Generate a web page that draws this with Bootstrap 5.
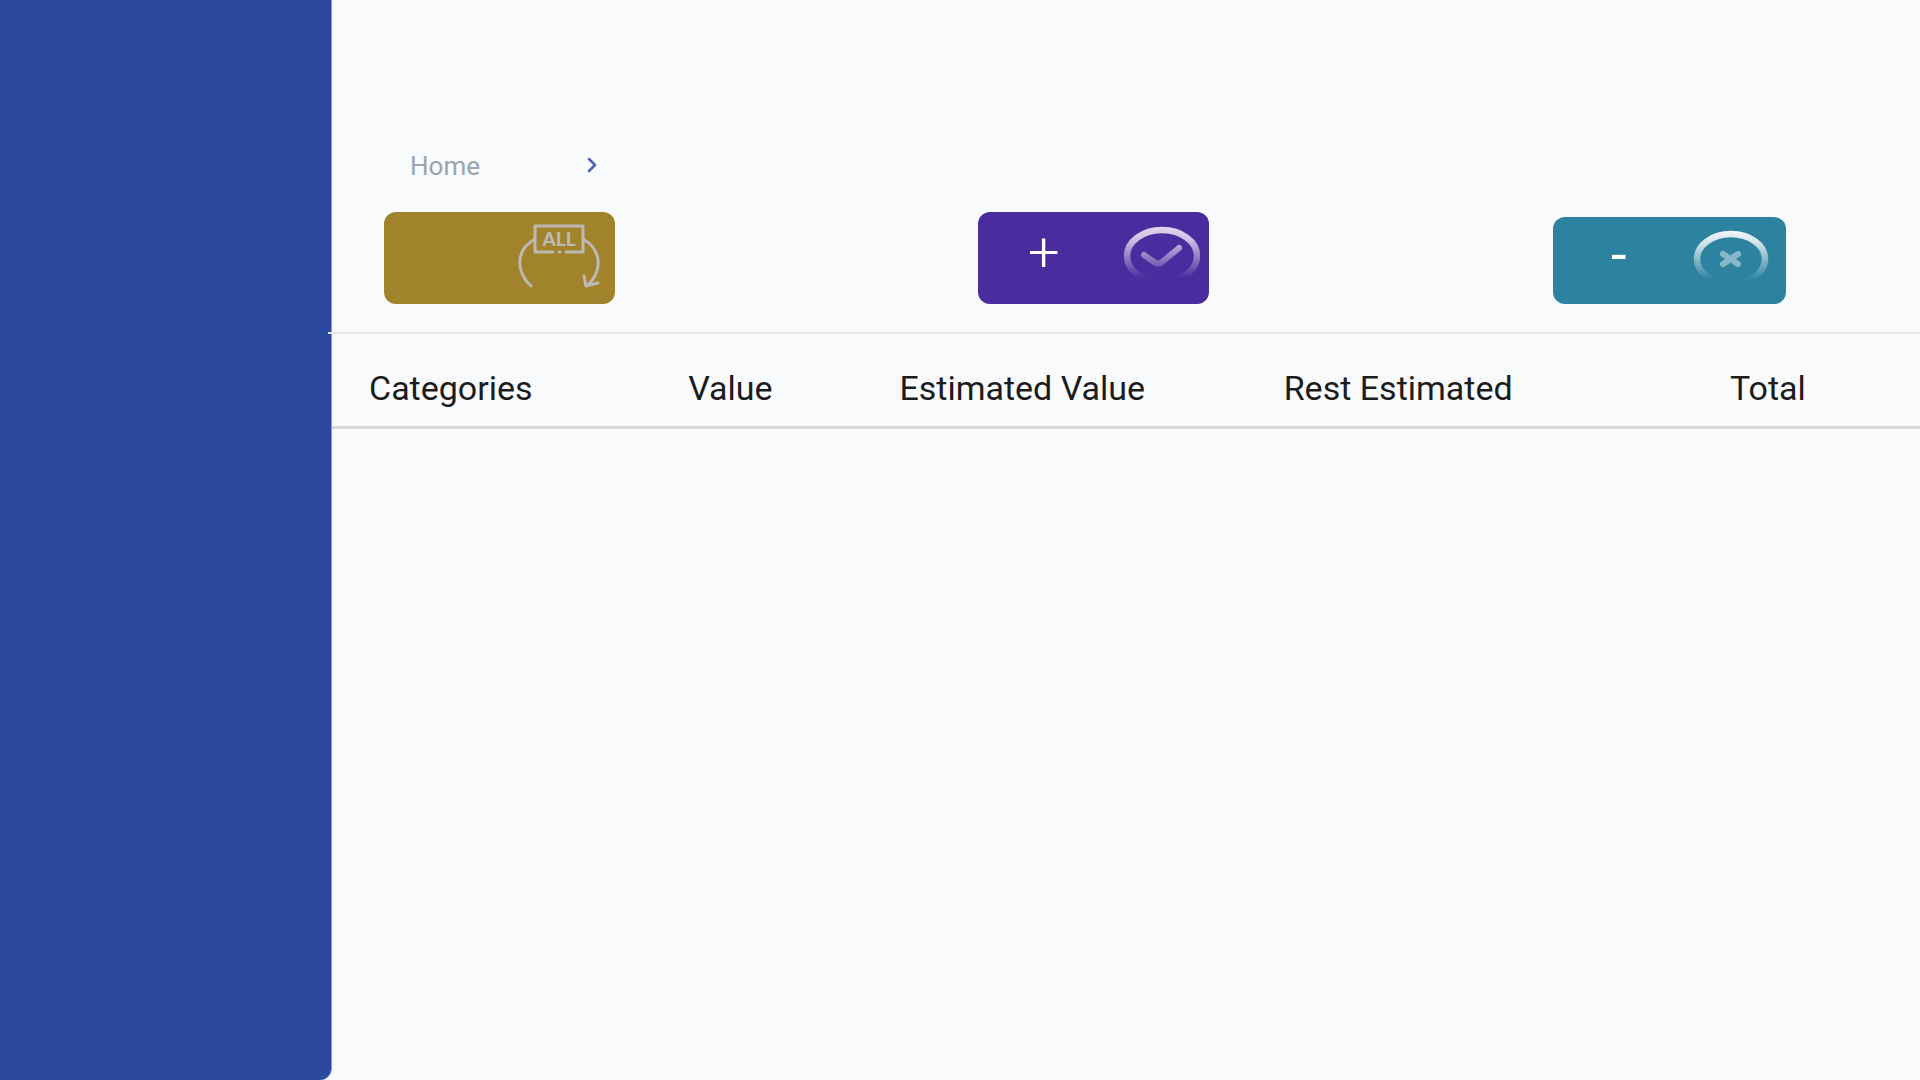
<!DOCTYPE html>
<html lang="en">
<head>
<meta charset="utf-8">
<meta name="viewport" content="width=device-width, initial-scale=1">
<title>Home</title>
<link href="https://cdn.jsdelivr.net/npm/bootstrap@5.3.0/dist/css/bootstrap.min.css" rel="stylesheet">
<style>
  body { background: #f8fafc; font-family: Roboto, "Liberation Sans", sans-serif; color: #1c1c1c; }
  .side-panel { flex: 0 0 332px; background: #2b499f; border-right: 1px solid #8394cb; border-bottom-right-radius: 12px; }
  .page-head { margin-left: -4px; padding: 146px 0 28px 56px; border-bottom: 2px solid #e4e6e8; }
  .crumbs { padding-left: 26px; gap: 107px; font-size: 26px; line-height: 40px; }
  .crumbs a { color: #9aa5ae; }
  .crumbs svg { margin-bottom: 2px; }
  .action-grid { display: grid; grid-template-columns: 594fr 575fr 367fr; align-items: end; margin-top: 26px; }
  .action-btn { width: 231px; height: 92px; border: 0; border-radius: 12px; color: #fff; font-size: 56px; line-height: 64px; padding: 0 0 12px; position: relative; }
  .action-all { background: #a1832c; }
  .action-add { background: #4a2c9e; padding-left: 50px; font-weight: 300; }
  .action-sub { background: #2c829f; width: 233px; height: 87px; padding-left: 58px; }
  .action-btn svg { position: absolute; top: 0; right: 0; }
  .totals { --bs-table-bg: transparent; --bs-table-color: #1c1c1c; table-layout: fixed; border-bottom: 3px solid #d7d8da; }
  .totals th { padding: 34px 0 18px 37px; font-size: 34px; line-height: 40px; font-weight: 400; border: 0; white-space: nowrap; }
</style>
<script src="https://cdn.jsdelivr.net/npm/bootstrap@5.3.0/dist/js/bootstrap.bundle.min.js"></script>
</head>
<body>
<div class="d-flex min-vh-100">
  <aside class="side-panel" aria-label="Sidebar"></aside>
  <main class="flex-grow-1">
    <header class="page-head">
      <nav class="crumbs d-flex align-items-center" aria-label="Breadcrumb">
        <a href="#" class="text-decoration-none">Home</a>
        <svg width="10" height="16" viewBox="0 0 10 16" fill="none" stroke="#4a63b3" stroke-width="2.5" stroke-linecap="round" stroke-linejoin="round" aria-hidden="true"><path d="M2 2 8 8 2 14"/></svg>
      </nav>
      <div class="action-grid">
        <div class="d-flex">
          <button type="button" class="action-btn action-all" aria-label="All">
            <svg width="105" height="92" viewBox="0 0 105 92" fill="none" stroke="#bcb9b5" stroke-width="3" stroke-linecap="round" stroke-linejoin="round" aria-hidden="true">
              <path d="M43 40H25V14H73V40H56"/><path d="M49 40h1"/>
              <path d="M25 27C5 38 6 60 21 74M73 27C92 38 93 59 77 74M74 64 76 74 88 71"/>
              <text x="49" y="34" text-anchor="middle" font-family="Lato, sans-serif" font-size="19" font-weight="900" fill="#bcb9b5" stroke="none">ALL</text>
            </svg>
          </button>
        </div>
        <div class="d-flex">
          <button type="button" class="action-btn action-add text-start" aria-label="Add">+
            <svg width="91" height="92" viewBox="0 0 91 92" fill="none" stroke-linecap="round" stroke-linejoin="round" aria-hidden="true">
              <defs><linearGradient id="addFade" gradientUnits="userSpaceOnUse" x1="0" y1="16" x2="0" y2="66"><stop stop-color="#ded5ef"/><stop offset=".25" stop-color="#cbbde3"/><stop offset="1" stop-color="#4a2c9e"/></linearGradient></defs>
              <path stroke="url(#addFade)" stroke-width="6.500" d="M9 44a35 26 0 1 1 70 0a35 26 0 1 1-70 0"/>
              <path stroke="url(#addFade)" stroke-width="6" d="M26 43 36 50Q40 53 44 50L61 36"/>
            </svg>
          </button>
        </div>
        <div class="d-flex">
          <button type="button" class="action-btn action-sub text-start" aria-label="Subtract">-
            <svg width="94" height="87" viewBox="0 0 94 87" fill="none" stroke-linecap="round" aria-hidden="true">
              <defs><linearGradient id="subFade" gradientUnits="userSpaceOnUse" x1="0" y1="13" x2="0" y2="63"><stop stop-color="#f4f7fa"/><stop offset=".25" stop-color="#d5e5ec"/><stop offset="1" stop-color="#2c829f"/></linearGradient></defs>
              <path stroke="url(#subFade)" stroke-width="6.500" d="M5 42a34 25 0 1 1 68 0a34 25 0 1 1-68 0"/>
              <path stroke="#87b7c9" stroke-width="6" d="M31 37 46 47M46 37 31 47"/>
            </svg>
          </button>
        </div>
      </div>
    </header>
    <table class="table totals mb-0">
      <colgroup><col style="width:20.1%"><col style="width:13.3%"><col style="width:24.2%"><col style="width:28.1%"><col></colgroup>
      <thead>
        <tr><th scope="col">Categories</th><th scope="col">Value</th><th scope="col">Estimated Value</th><th scope="col">Rest Estimated</th><th scope="col">Total</th></tr>
      </thead>
    </table>
  </main>
</div>
</body>
</html>
